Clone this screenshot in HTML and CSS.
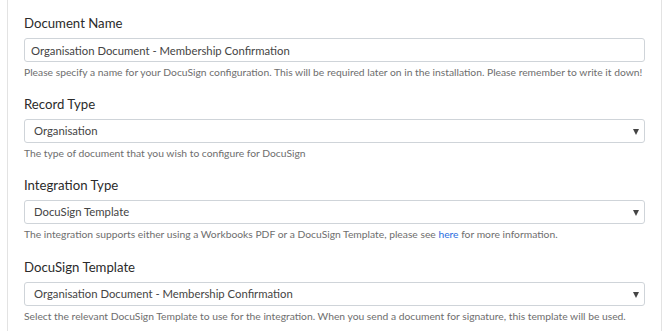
FILE: index.html
```html
<!DOCTYPE html>
<html lang="en">
<head>
  <meta charset="UTF-8" />
  <title>DocuSign Configuration</title>
  <link rel="stylesheet" href="styles.css">
</head>
<body>
  <div class="panel">
    <div class="field">
      <label class="field-label">Document Name</label>
      <input class="text-input" type="text" value="Organisation Document - Membership Confirmation" />
      <p class="help">Please specify a name for your DocuSign configuration. This will be required later on in the installation. Please remember to write it down!</p>
    </div>

    <div class="field">
      <label class="field-label">Record Type</label>
      <div class="select">Organisation<span class="arrow"></span></div>
      <p class="help">The type of document that you wish to configure for DocuSign</p>
    </div>

    <div class="field">
      <label class="field-label">Integration Type</label>
      <div class="select">DocuSign Template<span class="arrow"></span></div>
      <p class="help">The integration supports either using a Workbooks PDF or a DocuSign Template, please see <a href="#">here</a> for more information.</p>
    </div>

    <div class="field">
      <label class="field-label">DocuSign Template</label>
      <div class="select">Organisation Document - Membership Confirmation<span class="arrow"></span></div>
      <p class="help">Select the relevant DocuSign Template to use for the integration. When you send a document for signature, this template will be used.</p>
    </div>
  </div>
</body>
</html>
```

FILE: styles.css
```css
* {
  box-sizing: border-box;
}

body {
  margin: 0;
  background: #ffffff;
  font-family: 'Lato', sans-serif;
  color: #333333;
  height: 331px;
  overflow: hidden;
}

.panel {
  margin-left: 7px;
  width: 655px;
  min-height: 331px;
  border-left: 1px solid #e3e3e3;
  border-right: 1px solid #e3e3e3;
  padding: 13px 16px 0 16px;
}

.field {
  margin-bottom: 15px;
}

.field:nth-child(3) {
  margin-bottom: 16px;
}

.field-label {
  display: block;
  font-size: 13.2px;
  line-height: 20px;
  margin-bottom: 5px;
  color: #2b2b2b;
}

.text-input,
.select {
  display: block;
  width: 100%;
  height: 24px;
  border: 1px solid #cfd4d9;
  border-radius: 3px;
  font-family: inherit;
  font-size: 11.3px;
  color: #444;
  background: #fff;
  outline: none;
}

.text-input {
  padding: 0 6px;
}

.select {
  position: relative;
  line-height: 22px;
  padding: 0 9px;
}

.arrow {
  position: absolute;
  right: 5px;
  top: 9px;
  width: 0;
  height: 0;
  border-left: 3.5px solid transparent;
  border-right: 3.5px solid transparent;
  border-top: 6px solid #444;
}

.help {
  margin: 3px 0 0 0;
  font-size: 10.3px;
  line-height: 14px;
  color: #6e6e6e;
}

.help a {
  color: #2a6ee0;
  text-decoration: none;
}
```
